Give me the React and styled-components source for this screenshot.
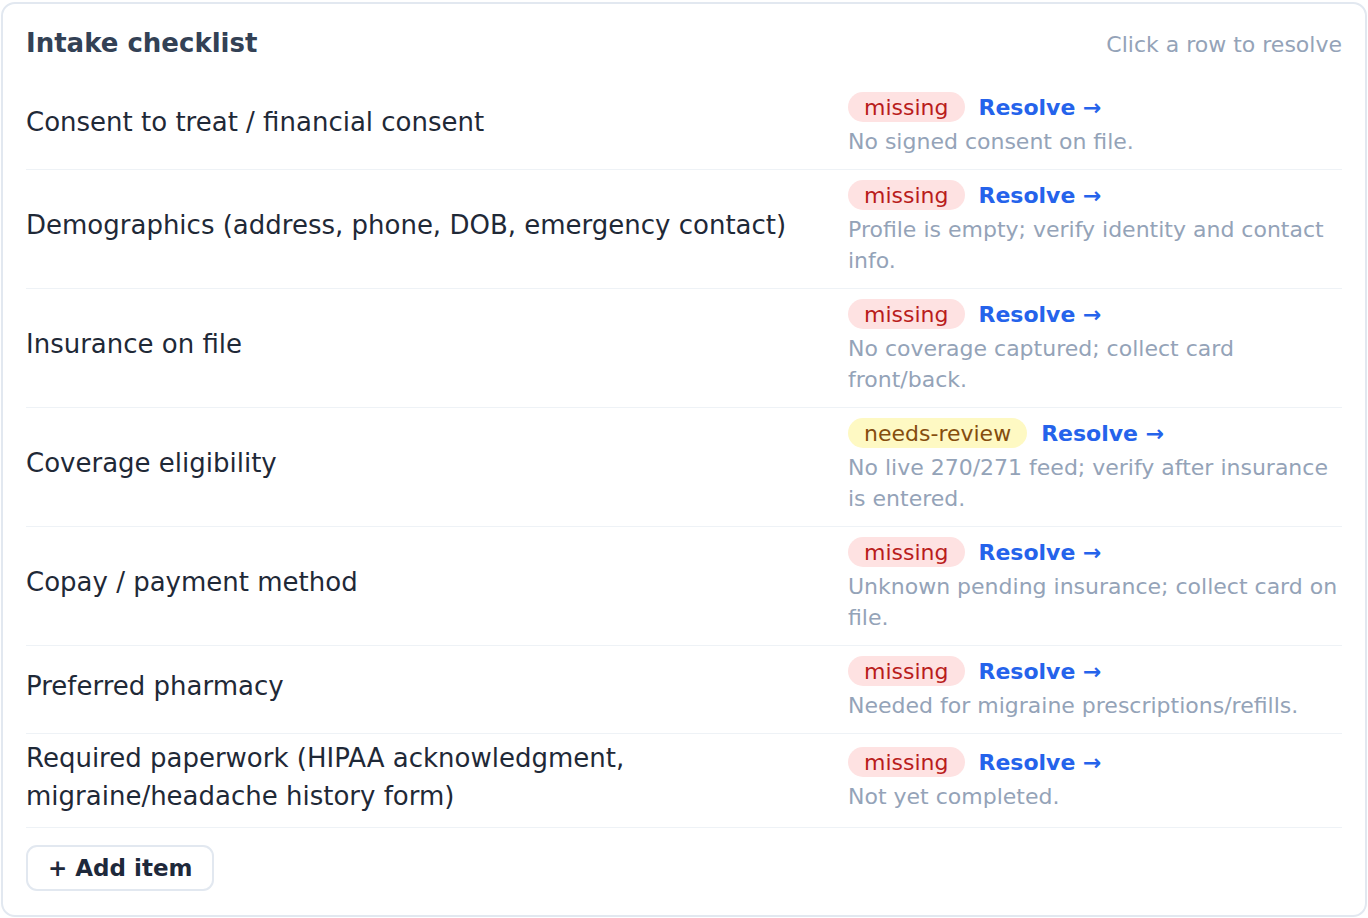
import React from "react";
import styled, { createGlobalStyle } from "styled-components";

const Global = createGlobalStyle`
  html, body { margin: 0; padding: 0; background: #ffffff; }
  body { font-family: "DejaVu Sans", Verdana, sans-serif; }
  * { box-sizing: border-box; }
`;

const Card = styled.section`
  display: flex;
  flex-direction: column;
  margin: 2px 1px 0 1px;
  border: 2px solid #e2e8f0;
  border-radius: 14px;
  background: #fff;
  padding: 23px 23px 24px 23px;
  height: 915px;
`;

const Header = styled.header`
  display: flex;
  justify-content: space-between;
  align-items: baseline;
  margin-bottom: 23px;
`;

const Title = styled.h2`
  margin: 0;
  font-size: 26px;
  line-height: 32px;
  font-weight: 700;
  color: #334155;
`;

const Hint = styled.span`
  font-size: 22px;
  color: #94a3b8;
`;

const List = styled.div`
  display: flex;
  flex-direction: column;
`;

const Row = styled.div`
  display: grid;
  grid-template-columns: 1fr 494px;
  column-gap: 24px;
  align-items: center;
  padding: 9px 0;
  border-bottom: 1px solid #eef2f6;
  cursor: pointer;
`;

const Label = styled.div`
  font-size: 26px;
  line-height: 37.5px;
  color: #1f2937;
  padding-bottom: 6px;
  margin: -3px 0;
`;

const Side = styled.div`
  display: flex;
  flex-direction: column;
  gap: 3px;
  padding-bottom: 3px;
`;

const Top = styled.div`
  display: flex;
  align-items: center;
  gap: 14px;
  height: 32px;
`;

const Badge = styled.span`
  display: inline-flex;
  align-items: center;
  height: 30px;
  padding: 0 16px;
  border-radius: 15px;
  font-size: 22px;
  background: ${(p) => (p.$tone === "review" ? "#fef9c3" : "#fee2e2")};
  color: ${(p) => (p.$tone === "review" ? "#854d0e" : "#b91c1c")};
`;

const Resolve = styled.a`
  font-size: 22px;
  font-weight: 700;
  color: #2563eb;
  text-decoration: none;
`;

const Desc = styled.div`
  font-size: 22px;
  line-height: 31px;
  color: #94a3b8;
`;

const AddButton = styled.button`
  align-self: flex-start;
  margin-top: 17px;
  height: 47px;
  padding: 0 20px;
  border: 2px solid #e2e8f0;
  border-radius: 11px;
  background: #fff;
  font-family: "DejaVu Sans", Verdana, sans-serif;
  font-size: 23px;
  font-weight: 700;
  color: #1e293b;
`;

const items = [
  { label: "Consent to treat / financial consent", status: "missing", desc: "No signed consent on file." },
  { label: "Demographics (address, phone, DOB, emergency contact)", status: "missing", desc: "Profile is empty; verify identity and contact info." },
  { label: "Insurance on file", status: "missing", desc: "No coverage captured; collect card front/back." },
  { label: "Coverage eligibility", status: "needs-review", desc: "No live 270/271 feed; verify after insurance is entered." },
  { label: "Copay / payment method", status: "missing", desc: "Unknown pending insurance; collect card on file." },
  { label: "Preferred pharmacy", status: "missing", desc: "Needed for migraine prescriptions/refills." },
  { label: "Required paperwork (HIPAA acknowledgment, migraine/headache history form)", status: "missing", desc: "Not yet completed." },
];

export default function App() {
  return (
    <>
      <Global />
      <Card>
        <Header>
          <Title>Intake checklist</Title>
          <Hint>Click a row to resolve</Hint>
        </Header>
        <List>
          {items.map((it) => (
            <Row key={it.label}>
              <Label>{it.label}</Label>
              <Side>
                <Top>
                  <Badge $tone={it.status === "needs-review" ? "review" : "missing"}>{it.status}</Badge>
                  <Resolve href="#">Resolve →</Resolve>
                </Top>
                <Desc>{it.desc}</Desc>
              </Side>
            </Row>
          ))}
        </List>
        <AddButton>+ Add item</AddButton>
      </Card>
    </>
  );
}
